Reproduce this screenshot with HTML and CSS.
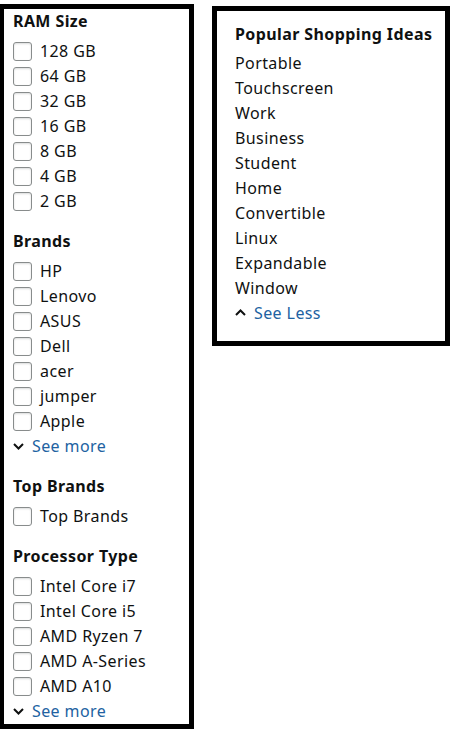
FILE: index.html
```html
<!DOCTYPE html>
<html lang="en">

<head>
    <meta charset="UTF-8">
    <meta name="viewport" content="width=device-width, initial-scale=1.0">
    <title>Filters</title>
    <link rel="stylesheet" href="styles.css">
</head>

<body>

    <div class="page">
        <div class="filter-box">
            <div class="filter-section">
                <h4>RAM Size</h4>
                <label class="check-row"><input type="checkbox"><span>128 GB</span></label>
                <label class="check-row"><input type="checkbox"><span>64 GB</span></label>
                <label class="check-row"><input type="checkbox"><span>32 GB</span></label>
                <label class="check-row"><input type="checkbox"><span>16 GB</span></label>
                <label class="check-row"><input type="checkbox"><span>8 GB</span></label>
                <label class="check-row"><input type="checkbox"><span>4 GB</span></label>
                <label class="check-row"><input type="checkbox"><span>2 GB</span></label>
            </div>

            <div class="filter-section">
                <h4>Brands</h4>
                <label class="check-row"><input type="checkbox"><span>HP</span></label>
                <label class="check-row"><input type="checkbox"><span>Lenovo</span></label>
                <label class="check-row"><input type="checkbox"><span>ASUS</span></label>
                <label class="check-row"><input type="checkbox"><span>Dell</span></label>
                <label class="check-row"><input type="checkbox"><span>acer</span></label>
                <label class="check-row"><input type="checkbox"><span>jumper</span></label>
                <label class="check-row"><input type="checkbox"><span>Apple</span></label>
                <a class="toggle-link" href="#">
                    <svg width="11" height="7" viewBox="0 0 11 7"><polyline points="1,1 5.5,5.5 10,1" /></svg>
                    See more
                </a>
            </div>

            <div class="filter-section">
                <h4>Top Brands</h4>
                <label class="check-row"><input type="checkbox"><span>Top Brands</span></label>
            </div>

            <div class="filter-section">
                <h4>Processor Type</h4>
                <label class="check-row"><input type="checkbox"><span>Intel Core i7</span></label>
                <label class="check-row"><input type="checkbox"><span>Intel Core i5</span></label>
                <label class="check-row"><input type="checkbox"><span>AMD Ryzen 7</span></label>
                <label class="check-row"><input type="checkbox"><span>AMD A-Series</span></label>
                <label class="check-row"><input type="checkbox"><span>AMD A10</span></label>
                <a class="toggle-link" href="#">
                    <svg width="11" height="7" viewBox="0 0 11 7"><polyline points="1,1 5.5,5.5 10,1" /></svg>
                    See more
                </a>
            </div>
        </div>

        <div class="ideas-box">
            <h4>Popular Shopping Ideas</h4>
            <ul class="ideas-list">
                <li>Portable</li>
                <li>Touchscreen</li>
                <li>Work</li>
                <li>Business</li>
                <li>Student</li>
                <li>Home</li>
                <li>Convertible</li>
                <li>Linux</li>
                <li>Expandable</li>
                <li>Window</li>
            </ul>
            <a class="toggle-link" href="#">
                <svg width="11" height="7" viewBox="0 0 11 7"><polyline points="1,6 5.5,1.5 10,6" /></svg>
                See Less
            </a>
        </div>
    </div>

</body>

</html>
```

FILE: styles.css
```css
body {
    font-family: "Noto Sans", "Open Sans", Arial, sans-serif;
    font-size: 16px;
    letter-spacing: 0.4px;
    color: #0f1111;
    background-color: #fff;
    margin: 0;
    padding: 0;
}

.page {
    display: flex;
    align-items: flex-start;
    gap: 18px;
    padding-top: 4px;
    margin-left: -1px;
}

.filter-box {
    width: 176px;
    border: 5px solid #000;
    padding: 1px 0 0.5px 9px;
}

.filter-section {
    margin-bottom: 16.5px;
}

.filter-section:last-child {
    margin-bottom: 0;
}

h4 {
    font-size: 16px;
    font-weight: bold;
    line-height: 22px;
    margin: 0 0 6.5px 0;
}

.check-row {
    display: flex;
    align-items: center;
    height: 25px;
    cursor: pointer;
}

.check-row input {
    appearance: none;
    -webkit-appearance: none;
    width: 19px;
    height: 19px;
    margin: 0 8px 0 0;
    border: 1px solid #888c8c;
    border-radius: 3px;
    background: #fff;
    box-shadow: inset 0 1px 2px rgba(15, 17, 17, 0.15);
}

.toggle-link {
    display: flex;
    align-items: center;
    height: 25px;
    color: #2162a1;
    text-decoration: none;
}

.toggle-link svg {
    margin: 0 8px 0 0;
    fill: none;
    stroke: #0f1111;
    stroke-width: 2;
}

.ideas-box {
    width: 210px;
    margin-top: 2px;
    border: 5px solid #000;
    padding: 12px 0 16px 18px;
}

.ideas-box h4 {
    margin-bottom: 6px;
}

.ideas-box .toggle-link {
    margin-top: -1px;
}

.ideas-list {
    list-style: none;
    margin: 0;
    padding: 0;
}

.ideas-list li {
    height: 25px;
    line-height: 25px;
}
```
